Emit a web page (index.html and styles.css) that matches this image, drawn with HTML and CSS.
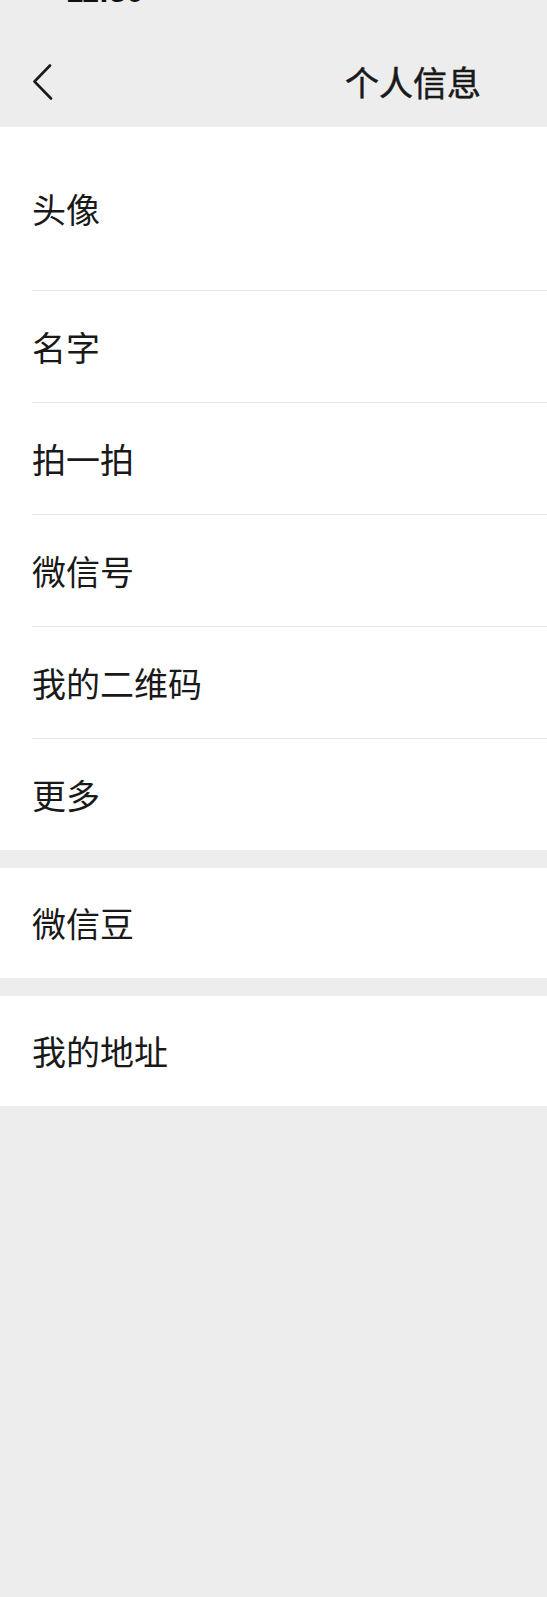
FILE: index.html
```html
<!DOCTYPE html>
<html lang="zh-CN">

<head>
    <meta charset="UTF-8">
    <meta name="viewport" content="width=device-width, initial-scale=1.0">
    <title>个人信息</title>
    <link rel="stylesheet" href="styles.css">
</head>

<body>
    <div class="header">
        <div class="status">
            <span class="status-time">11:30</span>
        </div>
        <div class="nav">
            <svg class="back" width="22" height="36" viewBox="0 0 22 36">
                <path d="M18 1.5 L2.5 17.5 L19 34.5" fill="none" stroke="#1a1a1a" stroke-width="2.6" stroke-linecap="round" stroke-linejoin="round" />
            </svg>
            <div class="nav-title">个人信息</div>
        </div>
    </div>

    <div class="group">
        <div class="row row-avatar">头像</div>
        <div class="row">名字</div>
        <div class="row">拍一拍</div>
        <div class="row">微信号</div>
        <div class="row">我的二维码</div>
        <div class="row">更多</div>
    </div>

    <div class="group">
        <div class="row row-single">微信豆</div>
    </div>

    <div class="group">
        <div class="row row-single">我的地址</div>
    </div>
</body>

</html>
```

FILE: styles.css
```css
body {
    margin: 0;
    padding: 0;
    background-color: #ededed;
    font-family: "Noto Sans CJK SC", "Noto Sans", sans-serif;
    color: #191919;
    min-height: 1597px;
}

.header {
    height: 127px;
    background-color: #ededed;
}

/* only the bottom edge of the clock shows */
.status {
    height: 36px;
    overflow: hidden;
    padding-left: 66px;
}

.status-time {
    display: block;
    font-family: "Liberation Sans", Arial, sans-serif;
    font-size: 31px;
    font-weight: bold;
    line-height: 31px;
    margin-top: -24px;
    color: #111;
}

.nav {
    height: 91px;
    display: flex;
    align-items: center;
    padding-left: 32px;
}

.back {
    display: block;
}

.nav-title {
    margin-left: auto;
    margin-right: 66px;
    font-size: 34px;
    line-height: 40px;
    color: #191919;
    -webkit-text-stroke: 0.5px #191919;
}

.group {
    background-color: #fff;
    margin-bottom: 18px;
}

.row {
    margin-left: 32px;
    height: 111px;
    border-top: 1px solid #e5e5e5;
    display: flex;
    align-items: center;
    font-size: 34px;
    line-height: 40px;
}

.row-avatar {
    height: 163px;
    border-top: none;
}

.row-single {
    height: 110px;
    border-top: none;
}
```
